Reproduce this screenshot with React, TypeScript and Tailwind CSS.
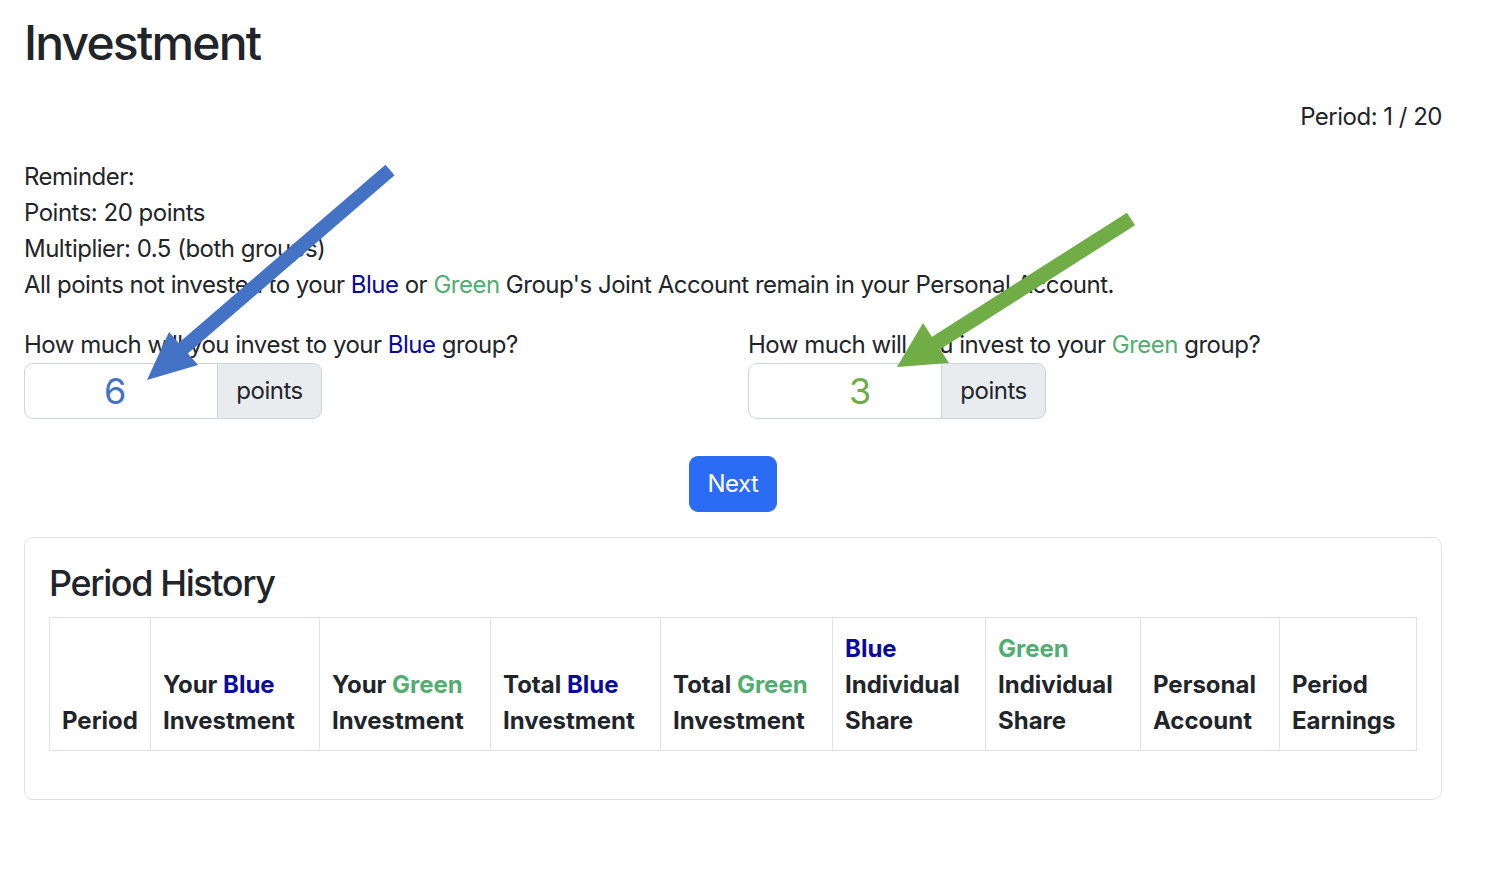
import React from 'react';

const BLUE_TEXT = 'text-[#0a0a9e]';
const GREEN_TEXT = 'text-[#52ad72]';

function Blue() {
  return <span className={BLUE_TEXT}>Blue</span>;
}

function Green() {
  return <span className={GREEN_TEXT}>Green</span>;
}

interface PointsInputProps {
  value: string;
  valueClass: string;
}

const PointsInput: React.FC<PointsInputProps> = ({ value, valueClass }) => (
  <div className="flex h-[56px] w-[298px]">
    <div
      className={`flex w-[194px] items-center rounded-l-[9px] border border-[#ced4da] text-[36px] ${valueClass}`}
    >
      {value}
    </div>
    <div className="flex w-[104px] items-center justify-center rounded-r-[9px] border border-l-0 border-[#ced4da] bg-[#e9ecef]">
      points
    </div>
  </div>
);

const headers: { w: string; label: React.ReactNode }[] = [
  { w: 'w-[101px]', label: <>Period</> },
  { w: 'w-[169px]', label: <>Your <Blue /><br />Investment</> },
  { w: 'w-[171px]', label: <>Your <Green /><br />Investment</> },
  { w: 'w-[170px]', label: <>Total <Blue /><br />Investment</> },
  { w: 'w-[172px]', label: <>Total <Green /><br />Investment</> },
  { w: 'w-[153px]', label: <><Blue /><br />Individual<br />Share</> },
  { w: 'w-[155px]', label: <><Green /><br />Individual<br />Share</> },
  { w: 'w-[139px]', label: <>Personal<br />Account</> },
  { w: 'w-[137px]', label: <>Period<br />Earnings</> },
];

function Arrows() {
  return (
    <svg
      className="pointer-events-none absolute left-0 top-0"
      width="1500"
      height="875"
      viewBox="0 0 1500 875"
    >
      {/* blue arrow */}
      <line x1="390" y1="170" x2="180" y2="351" stroke="#4472c4" strokeWidth="14" />
      <polygon points="147,380 169,332 198,365" fill="#4472c4" />
      {/* green arrow */}
      <line x1="1131" y1="219" x2="933" y2="345" stroke="#70ad47" strokeWidth="15" />
      <polygon points="897,367 923,323 949,363" fill="#70ad47" />
    </svg>
  );
}

export default function App() {
  return (
    <div className="relative min-h-screen bg-white text-[24px] leading-[36px] text-[#212529] [font-family:Inter,'Noto_Sans',sans-serif]">
      <div className="ml-[24px] w-[1418px] pt-[14px]">
        <h1 className="text-[48px] font-medium leading-[57.6px] tracking-[-1.8px]">Investment</h1>

        <div className="tracking-[-0.5px]">
          <div className="mt-[27px] text-right">Period: 1 / 20</div>

          <div className="mt-[24px]">
            <div>Reminder:</div>
            <div>Points: 20 points</div>
            <div>Multiplier: 0.5 (both groups)</div>
            <div>
              All points not invested to your <Blue /> or <Green /> Group's Joint Account remain in
              your Personal Account.
            </div>
          </div>

          <div className="mt-[24px] grid grid-cols-[724px_1fr]">
            <div>
              <div>
                How much will you invest to your <Blue /> group?
              </div>
              <PointsInput value="6" valueClass="pl-[79px] text-[#4472c4]" />
            </div>
            <div>
              <div>
                How much will you invest to your <Green /> group?
              </div>
              <PointsInput value="3" valueClass="pl-[100px] text-[#70ad47]" />
            </div>
          </div>

          <div className="mt-[37px] flex justify-center">
            <button className="h-[56px] rounded-[9px] border border-[#2b6cf5] bg-[#2b6cf5] px-[18px] text-white">
              Next
            </button>
          </div>
        </div>

        <div className="mt-[25px] rounded-[9px] border border-[#dfe2e6] p-[24px]">
          <h3 className="mb-[12px] text-[36px] font-medium leading-[43px] tracking-[-1.4px]">
            Period History
          </h3>
          <table className="mb-[24px] w-full table-fixed border-collapse">
            <colgroup>
              {headers.map((h, i) => (
                <col key={i} className={h.w} />
              ))}
            </colgroup>
            <thead>
              <tr>
                {headers.map((h, i) => (
                  <th
                    key={i}
                    className="border border-[#dee2e6] px-[12px] pb-[11px] pt-[13px] text-left align-bottom font-bold leading-[36px]"
                  >
                    {h.label}
                  </th>
                ))}
              </tr>
            </thead>
          </table>
        </div>
      </div>
      <Arrows />
    </div>
  );
}
